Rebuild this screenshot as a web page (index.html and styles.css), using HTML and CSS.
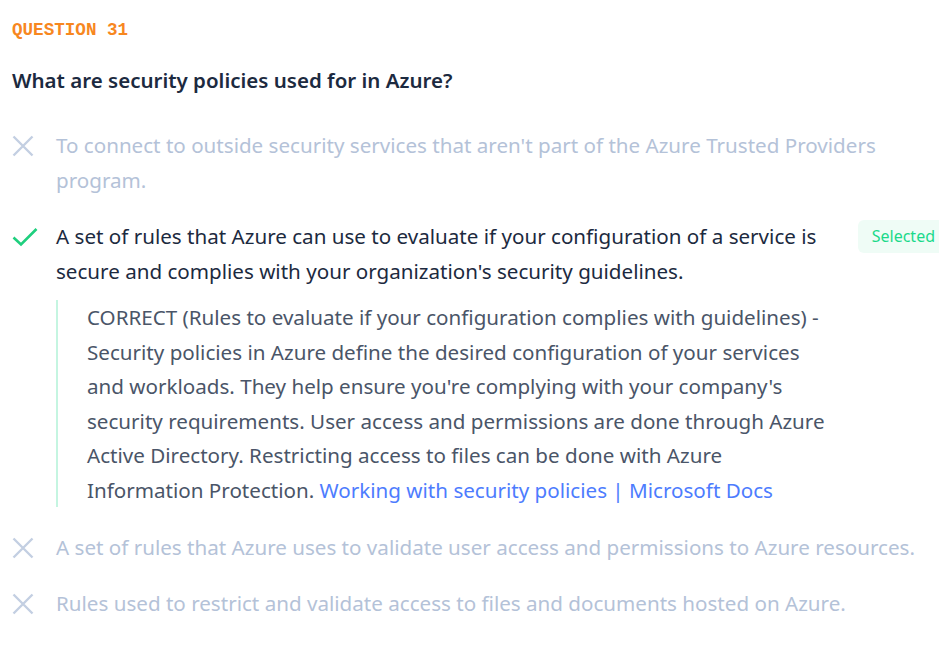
FILE: index.html
```html
<!DOCTYPE html>
<html>
<head>
<meta charset="utf-8">
<link rel="stylesheet" href="styles.css">
</head>
<body>
<div class="page">
  <div class="qlabel">QUESTION 31</div>
  <h2 class="question">What are security policies used for in Azure?</h2>
  <ul class="options">
    <li class="option wrong">
      <span class="icon"><svg width="22" height="22" viewBox="0 0 22 22"><path d="M1.5 1.5L20.5 20.5M20.5 1.5L1.5 20.5" stroke="#c3cfe2" stroke-width="2.4" fill="none"/></svg></span>
      <div class="otext">To connect to outside security services that aren't part of the Azure Trusted Providers program.</div>
    </li>
    <li class="option right">
      <span class="icon"><svg width="26" height="20" viewBox="0 0 26 20"><path d="M1.5 10.5L9 17.5L24.5 2" stroke="#1fcf7e" stroke-width="2.6" fill="none"/></svg></span>
      <div class="obody">
        <div class="otext">A set of rules that Azure can use to evaluate if your configuration of a service is secure and complies with your organization's security guidelines.</div>
        <div class="explain">CORRECT (Rules to evaluate if your configuration complies with guidelines) - Security policies in Azure define the desired configuration of your services and workloads. They help ensure you're complying with your company's security requirements. User access and permissions are done through Azure Active Directory. Restricting access to files can be done with Azure Information Protection. <a href="#">Working with security policies | Microsoft Docs</a></div>
      </div>
      <span class="badge">Selected</span>
    </li>
    <li class="option wrong">
      <span class="icon"><svg width="22" height="22" viewBox="0 0 22 22"><path d="M1.5 1.5L20.5 20.5M20.5 1.5L1.5 20.5" stroke="#c3cfe2" stroke-width="2.4" fill="none"/></svg></span>
      <div class="otext">A set of rules that Azure uses to validate user access and permissions to Azure resources.</div>
    </li>
    <li class="option wrong">
      <span class="icon"><svg width="22" height="22" viewBox="0 0 22 22"><path d="M1.5 1.5L20.5 20.5M20.5 1.5L1.5 20.5" stroke="#c3cfe2" stroke-width="2.4" fill="none"/></svg></span>
      <div class="otext">Rules used to restrict and validate access to files and documents hosted on Azure.</div>
    </li>
  </ul>
</div>
</body>
</html>
```
FILE: styles.css
```css
html, body {
  margin: 0;
  padding: 0;
  background: #ffffff;
}
.page {
  padding: 18px 0 0 12px;
  font-family: "Noto Sans", "Open Sans", sans-serif;
}
.qlabel {
  font-family: "Liberation Mono", monospace;
  font-weight: bold;
  font-size: 17.6px;
  line-height: 24px;
  color: #f7871f;
}
.question {
  margin: 26px 0 0 0;
  font-size: 20.5px;
  line-height: 24px;
  font-weight: 600;
  color: #1c2a40;
}
.options {
  list-style: none;
  margin: 36px 0 0 0;
  padding: 0;
}
.option {
  display: flex;
  align-items: flex-start;
  margin-bottom: 21px;
  font-size: 20.6px;
  line-height: 35px;
}
.option.right {
  margin-bottom: 23px;
}
.icon {
  width: 44px;
  flex: none;
  height: 35px;
  display: flex;
  align-items: center;
}
.otext {
  flex: 1;
}
.wrong .otext {
  color: #b4c2d8;
}
.obody {
  flex: 1;
  max-width: 779px;
}
.right .otext {
  color: #1c2a40;
}
.explain {
  margin-top: 11px;
  border-left: 2px solid #c5f5e1;
  padding-left: 29px;
  color: #4a5568;
  line-height: 34.5px;
}
.explain a {
  color: #4d7cfe;
  text-decoration: none;
}
.badge {
  margin-left: auto;
  margin-top: 1px;
  background: #effcf6;
  color: #1ad98a;
  font-size: 16px;
  line-height: 33px;
  padding: 0 4px 0 14px;
  border-radius: 6px 0 0 6px;
  flex: none;
}
```
